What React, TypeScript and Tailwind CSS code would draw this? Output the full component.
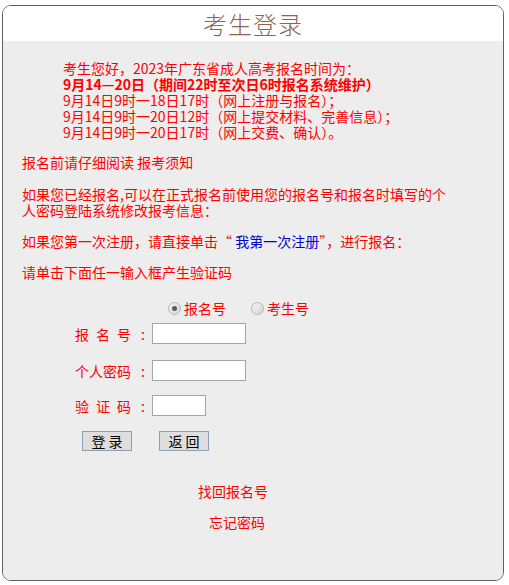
import React, { ReactNode } from "react";

const font = { fontFamily: '"Noto Sans CJK SC", "Liberation Sans", sans-serif' };

export default function App() {
  return (
    <div className="w-[509px] h-[585px] bg-white overflow-hidden pt-[5px] pl-[2px]" style={font}>
      <div className="w-[502px] h-[576px] border border-[#5f5f5f] rounded-[9px] overflow-hidden flex flex-col">
        <div className="h-[35px] bg-white flex items-center justify-center shrink-0">
          <h1 className="text-[24px] leading-none font-light text-[#93634a] tracking-[1px]">考生登录</h1>
        </div>

        <div className="flex-1 bg-[#ededed] pt-[19px] pl-[19px] text-[14px] leading-[16px] text-[#ff0000]">
          <div className="pl-[41px]">
            <p>考生您好，2023年广东省成人高考报名时间为：</p>
            <p className="font-bold">9月14—20日（期间22时至次日6时报名系统维护）</p>
            <p>9月14日9时一18日17时（网上注册与报名）；</p>
            <p>9月14日9时一20日12时（网上提交材料、完善信息）；</p>
            <p>9月14日9时一20日17时（网上交费、确认）。</p>
          </div>

          <p className="mt-[14px]">
            报名前请仔细阅读 <a className="cursor-pointer">报考须知</a>
          </p>
          <p className="mt-[16px] w-[432px]">
            如果您已经报名,可以在正式报名前使用您的报名号和报名时填写的个人密码登陆系统修改报考信息：
          </p>
          <p className="mt-[15px]">
            如果您第一次注册，请直接单击“ <a className="text-[#0000cc] cursor-pointer">我第一次注册</a>”，进行报名：
          </p>
          <p className="mt-[15px]">请单击下面任一输入框产生验证码</p>

          <div className="mt-[18px] h-[20px] flex items-center">
            <Radio checked className="ml-[146px]" label="报名号" />
            <Radio className="ml-[25px]" label="考生号" />
          </div>

          <FormRow className="mt-[5px]" label={<Spread chars={["报", "名", "号"]} />} inputWidth="w-[94px]" />
          <FormRow className="mt-[16px]" label={<span>个人密码</span>} inputWidth="w-[94px]" />
          <FormRow className="mt-[14px]" label={<Spread chars={["验", "证", "码"]} />} inputWidth="w-[54px]" />

          <div className="mt-[15px] flex text-black">
            <Btn className="ml-[60px]">登 录</Btn>
            <Btn className="ml-[27px]">返 回</Btn>
          </div>

          <p className="mt-[32px] ml-[176px] cursor-pointer">找回报名号</p>
          <p className="mt-[15px] ml-[187px] cursor-pointer">忘记密码</p>
        </div>
      </div>
    </div>
  );
}

const Spread = ({ chars }: { chars: string[] }) => (
  <span className="w-[56px] flex justify-between">
    {chars.map((c) => (
      <span key={c}>{c}</span>
    ))}
  </span>
);

const FormRow = ({
  label,
  inputWidth,
  className,
}: {
  label: ReactNode;
  inputWidth: string;
  className?: string;
}) => (
  <div className={`flex items-center ml-[53px] ${className}`}>
    <div className="w-[77px] flex items-center">
      {label}
      <span className="ml-[10px]">:</span>
    </div>
    <input
      type="text"
      className={`${inputWidth} h-[21px] bg-white border border-[#a5a5a5] outline-none px-1 text-[13px] text-black`}
    />
  </div>
);

const Radio = ({
  checked,
  label,
  className,
}: {
  checked?: boolean;
  label: string;
  className?: string;
}) => (
  <label className={`flex items-center ${className}`}>
    <span className="w-[13px] h-[13px] rounded-full border border-[#b4b4b4] bg-gradient-to-br from-[#f4f4f4] to-[#d6d6d6] flex items-center justify-center">
      {checked && <span className="w-[5px] h-[5px] rounded-full bg-[#5a5a5a]" />}
    </span>
    <span className="ml-[3px]">{label}</span>
  </label>
);

const Btn = ({ children, className }: { children: ReactNode; className?: string }) => (
  <button className={`w-[50px] h-[20px] bg-[#dedede] border border-[#8d9fb3] text-[14px] leading-none ${className}`}>
    {children}
  </button>
);
